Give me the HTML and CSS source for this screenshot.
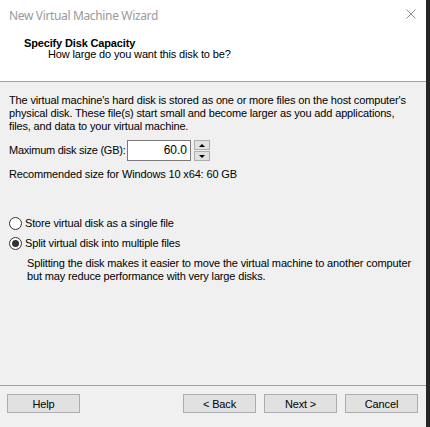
FILE: index.html
```html
<!DOCTYPE html>
<html>
<head>
<meta charset="utf-8">
<link rel="stylesheet" href="styles.css">
</head>
<body>
<div class="window">
  <div class="main">
    <div class="header">
      <div class="titlebar">
        <span class="title">New Virtual Machine Wizard</span>
        <svg class="close" width="10" height="10" viewBox="0 0 10 10"><path d="M0.5 0.5 L9.5 9.5 M9.5 0.5 L0.5 9.5" stroke="#8c8c8c" stroke-width="1" fill="none"/></svg>
      </div>
      <div class="wiz-title">Specify Disk Capacity</div>
      <div class="wiz-sub">How large do you want this disk to be?</div>
    </div>
    <div class="content">
      <p class="intro">The virtual machine's hard disk is stored as one or more files on the host computer's physical disk. These file(s) start small and become larger as you add applications, files, and data to your virtual machine.</p>
      <div class="size-row">
        <span class="label">Maximum disk size (GB):</span>
        <div class="input">60.0</div>
        <div class="spinner">
          <div class="spin-btn"><span class="arrow-up"></span></div>
          <div class="spin-btn"><span class="arrow-down"></span></div>
        </div>
      </div>
      <div class="recommend">Recommended size for Windows 10 x64: 60 GB</div>
      <div class="radio-row first">
        <span class="radio"></span>
        <span>Store virtual disk as a single file</span>
      </div>
      <div class="radio-row">
        <span class="radio checked"></span>
        <span>Split virtual disk into multiple files</span>
      </div>
      <p class="desc">Splitting the disk makes it easier to move the virtual machine to another computer but may reduce performance with very large disks.</p>
    </div>
    <div class="footer">
      <button class="btn">Help</button>
      <div class="spacer"></div>
      <button class="btn">&lt; Back</button>
      <button class="btn">Next &gt;</button>
      <button class="btn">Cancel</button>
    </div>
  </div>
  <div class="edge"></div>
</div>
</body>
</html>
```

FILE: styles.css
```css
html, body {
  margin: 0;
  padding: 0;
  background: #f0f0f0;
}
body {
  font-family: "Liberation Sans", Arial, sans-serif;
  font-size: 11px;
  line-height: 13px;
  letter-spacing: -0.15px;
  color: #000;
}
.window {
  display: flex;
  width: 430px;
  height: 427px;
  overflow: hidden;
}
.main {
  width: 426px;
  display: flex;
  flex-direction: column;
  background: #f0f0f0;
}
.edge {
  width: 4px;
  background: #262626;
}
.header {
  background: #fff;
  height: 81px;
  border-bottom: 1px solid #a0a0a0;
}
.titlebar {
  height: 30px;
  display: flex;
  align-items: center;
  justify-content: space-between;
  padding: 0 10px 0 9px;
}
.title {
  font-family: "Noto Sans", "Open Sans", sans-serif;
  font-size: 12px;
  letter-spacing: -0.35px;
  color: #9a9a9a;
}
.close {
  margin-top: -3px;
}
.wiz-title {
  font-weight: bold;
  line-height: 10px;
  margin: 8px 0 0 24px;
}
.wiz-sub {
  margin-left: 48px;
  line-height: 13px;
}
.content {
  flex: 1;
  padding: 12px 0 0 9px;
}
.intro {
  margin: 0;
  width: 400px;
}
.size-row {
  display: flex;
  align-items: center;
  margin-top: 7px;
  height: 21px;
}
.label {
  width: 118px;
  flex-shrink: 0;
  white-space: nowrap;
  letter-spacing: -0.25px;
}
.input {
  width: 59px;
  height: 19px;
  flex-shrink: 0;
  border: 1px solid #7a7a7a;
  background: #fff;
  text-align: right;
  padding-right: 3px;
  font-size: 12px;
  letter-spacing: 0;
  line-height: 19px;
}
.spinner {
  margin-left: 3px;
  width: 16px;
  height: 21px;
  display: flex;
  flex-direction: column;
  gap: 1px;
}
.spin-btn {
  flex: 1;
  border: 1px solid #adadad;
  background: #e1e1e1;
  display: flex;
  align-items: center;
  justify-content: center;
}
.arrow-up {
  width: 0;
  height: 0;
  border-left: 3px solid transparent;
  border-right: 3px solid transparent;
  border-bottom: 3px solid #000;
}
.arrow-down {
  width: 0;
  height: 0;
  border-left: 3px solid transparent;
  border-right: 3px solid transparent;
  border-top: 3px solid #000;
}
.recommend {
  margin-top: 7px;
}
.radio-row {
  display: flex;
  align-items: center;
  gap: 3px;
  height: 13px;
  margin-top: 7px;
}
.radio-row.first {
  margin-top: 36px;
}
.radio {
  width: 11px;
  height: 11px;
  border: 1px solid #333;
  border-radius: 50%;
  background: #fff;
  display: flex;
  align-items: center;
  justify-content: center;
}
.radio.checked::after {
  content: "";
  width: 7px;
  height: 7px;
  border-radius: 50%;
  background: #333;
}
.desc {
  margin: 7px 0 0 18px;
  width: 400px;
}
.footer {
  border-top: 1px solid #a0a0a0;
  height: 33px;
  display: flex;
  align-items: flex-start;
  padding: 8px 8px 0 7px;
  gap: 8px;
}
.spacer {
  flex: 1;
}
.btn {
  width: 73px;
  height: 19px;
  background: #e1e1e1;
  border: 1px solid #adadad;
  font-family: "Liberation Sans", Arial, sans-serif;
  font-size: 11px;
  letter-spacing: -0.15px;
  color: #000;
  padding: 0;
  margin: 0;
}
```
